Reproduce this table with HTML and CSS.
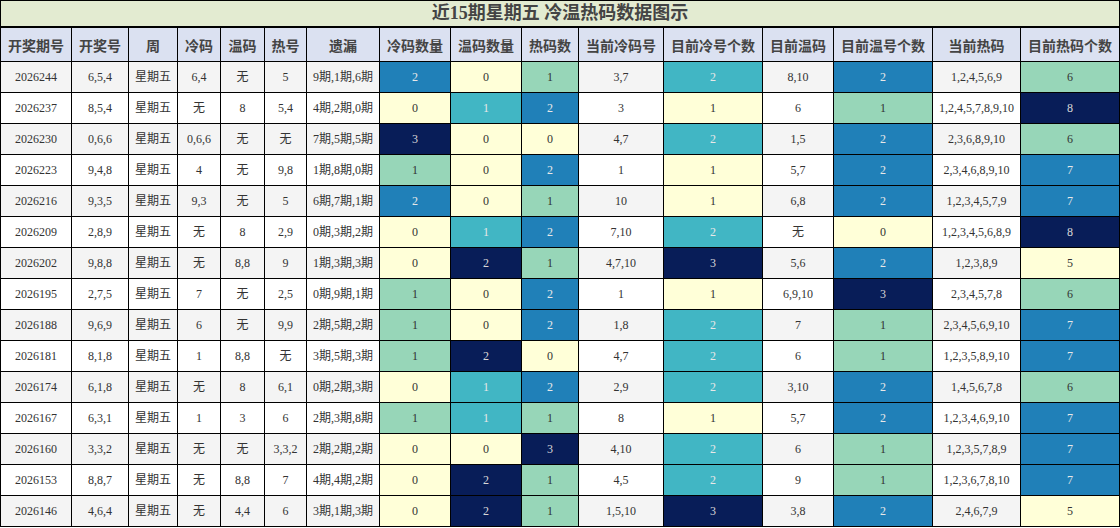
FILE: index.html
```html
<!DOCTYPE html>
<html lang="zh-CN">
<head>
<meta charset="utf-8">
<title>近15期星期五 冷温热码数据图示</title>
<link rel="stylesheet" href="styles.css">
</head>
<body>
<table class="grid">
<colgroup>
<col class="w71"><col class="w57"><col class="w49"><col class="w43"><col class="w44"><col class="w42"><col class="w73"><col class="w71"><col class="w71"><col class="w57"><col class="w85"><col class="w99"><col class="w71"><col class="w99"><col class="w88"><col class="w99">
</colgroup>
<thead>
<tr class="title-row"><th colspan="16">近15期星期五 冷温热码数据图示</th></tr>
<tr class="head-row">
<th>开奖期号</th><th>开奖号</th><th>周</th><th>冷码</th><th>温码</th><th>热号</th><th>遗漏</th><th>冷码数量</th><th>温码数量</th><th>热码数</th><th>当前冷码号</th><th>目前冷号个数</th><th>目前温码</th><th>目前温号个数</th><th>当前热码</th><th>目前热码个数</th>
</tr>
</thead>
<tbody>
<tr><td>2026244</td><td>6,5,4</td><td>星期五</td><td>6,4</td><td>无</td><td>5</td><td>9期,1期,6期</td><td class="c3">2</td><td class="c0">0</td><td class="c1">1</td><td>3,7</td><td class="c2">2</td><td>8,10</td><td class="c3">2</td><td>1,2,4,5,6,9</td><td class="c1">6</td></tr>
<tr><td>2026237</td><td>8,5,4</td><td>星期五</td><td>无</td><td>8</td><td>5,4</td><td>4期,2期,0期</td><td class="c0">0</td><td class="c2">1</td><td class="c3">2</td><td>3</td><td class="c0">1</td><td>6</td><td class="c1">1</td><td>1,2,4,5,7,8,9,10</td><td class="c4">8</td></tr>
<tr><td>2026230</td><td>0,6,6</td><td>星期五</td><td>0,6,6</td><td>无</td><td>无</td><td>7期,5期,5期</td><td class="c4">3</td><td class="c0">0</td><td class="c0">0</td><td>4,7</td><td class="c2">2</td><td>1,5</td><td class="c3">2</td><td>2,3,6,8,9,10</td><td class="c1">6</td></tr>
<tr><td>2026223</td><td>9,4,8</td><td>星期五</td><td>4</td><td>无</td><td>9,8</td><td>1期,8期,0期</td><td class="c1">1</td><td class="c0">0</td><td class="c3">2</td><td>1</td><td class="c0">1</td><td>5,7</td><td class="c3">2</td><td>2,3,4,6,8,9,10</td><td class="c3">7</td></tr>
<tr><td>2026216</td><td>9,3,5</td><td>星期五</td><td>9,3</td><td>无</td><td>5</td><td>6期,7期,1期</td><td class="c3">2</td><td class="c0">0</td><td class="c1">1</td><td>10</td><td class="c0">1</td><td>6,8</td><td class="c3">2</td><td>1,2,3,4,5,7,9</td><td class="c3">7</td></tr>
<tr><td>2026209</td><td>2,8,9</td><td>星期五</td><td>无</td><td>8</td><td>2,9</td><td>0期,3期,2期</td><td class="c0">0</td><td class="c2">1</td><td class="c3">2</td><td>7,10</td><td class="c2">2</td><td>无</td><td class="c0">0</td><td>1,2,3,4,5,6,8,9</td><td class="c4">8</td></tr>
<tr><td>2026202</td><td>9,8,8</td><td>星期五</td><td>无</td><td>8,8</td><td>9</td><td>1期,3期,3期</td><td class="c0">0</td><td class="c4">2</td><td class="c1">1</td><td>4,7,10</td><td class="c4">3</td><td>5,6</td><td class="c3">2</td><td>1,2,3,8,9</td><td class="c0">5</td></tr>
<tr><td>2026195</td><td>2,7,5</td><td>星期五</td><td>7</td><td>无</td><td>2,5</td><td>0期,9期,1期</td><td class="c1">1</td><td class="c0">0</td><td class="c3">2</td><td>1</td><td class="c0">1</td><td>6,9,10</td><td class="c4">3</td><td>2,3,4,5,7,8</td><td class="c1">6</td></tr>
<tr><td>2026188</td><td>9,6,9</td><td>星期五</td><td>6</td><td>无</td><td>9,9</td><td>2期,5期,2期</td><td class="c1">1</td><td class="c0">0</td><td class="c3">2</td><td>1,8</td><td class="c2">2</td><td>7</td><td class="c1">1</td><td>2,3,4,5,6,9,10</td><td class="c3">7</td></tr>
<tr><td>2026181</td><td>8,1,8</td><td>星期五</td><td>1</td><td>8,8</td><td>无</td><td>3期,5期,3期</td><td class="c1">1</td><td class="c4">2</td><td class="c0">0</td><td>4,7</td><td class="c2">2</td><td>6</td><td class="c1">1</td><td>1,2,3,5,8,9,10</td><td class="c3">7</td></tr>
<tr><td>2026174</td><td>6,1,8</td><td>星期五</td><td>无</td><td>8</td><td>6,1</td><td>0期,2期,3期</td><td class="c0">0</td><td class="c2">1</td><td class="c3">2</td><td>2,9</td><td class="c2">2</td><td>3,10</td><td class="c3">2</td><td>1,4,5,6,7,8</td><td class="c1">6</td></tr>
<tr><td>2026167</td><td>6,3,1</td><td>星期五</td><td>1</td><td>3</td><td>6</td><td>2期,3期,8期</td><td class="c1">1</td><td class="c2">1</td><td class="c1">1</td><td>8</td><td class="c0">1</td><td>5,7</td><td class="c3">2</td><td>1,2,3,4,6,9,10</td><td class="c3">7</td></tr>
<tr><td>2026160</td><td>3,3,2</td><td>星期五</td><td>无</td><td>无</td><td>3,3,2</td><td>2期,2期,2期</td><td class="c0">0</td><td class="c0">0</td><td class="c4">3</td><td>4,10</td><td class="c2">2</td><td>6</td><td class="c1">1</td><td>1,2,3,5,7,8,9</td><td class="c3">7</td></tr>
<tr><td>2026153</td><td>8,8,7</td><td>星期五</td><td>无</td><td>8,8</td><td>7</td><td>4期,4期,2期</td><td class="c0">0</td><td class="c4">2</td><td class="c1">1</td><td>4,5</td><td class="c2">2</td><td>9</td><td class="c1">1</td><td>1,2,3,6,7,8,10</td><td class="c3">7</td></tr>
<tr><td>2026146</td><td>4,6,4</td><td>星期五</td><td>无</td><td>4,4</td><td>6</td><td>3期,1期,3期</td><td class="c0">0</td><td class="c4">2</td><td class="c1">1</td><td>1,5,10</td><td class="c4">3</td><td>3,8</td><td class="c3">2</td><td>2,4,6,7,9</td><td class="c0">5</td></tr>
</tbody>
</table>
</body>
</html>
```
FILE: styles.css
```css
html, body {
  margin: 0;
  padding: 0;
  background: #ffffff;
}

.grid {
  width: 1120px;
  table-layout: fixed;
  border-collapse: collapse;
  font-family: "Liberation Serif", "Noto Sans CJK SC", serif;
  color: #333333;
}

.w71 { width: 71px; }
.w57 { width: 57px; }
.w49 { width: 49px; }
.w43 { width: 43px; }
.w44 { width: 44px; }
.w42 { width: 42px; }
.w73 { width: 73px; }
.w85 { width: 85px; }
.w88 { width: 88px; }
.w99 { width: 99px; }

.grid th,
.grid td {
  border: 1px solid #000000;
  padding: 0;
  text-align: center;
  overflow: hidden;
  white-space: nowrap;
}

.title-row th {
  height: 25px;
  background: #e3ebd1;
  border-bottom: 2px solid #000000;
  font-size: 18px;
  font-weight: bold;
  color: #444444;
  line-height: 25px;
}

.head-row th {
  height: 33px;
  background: #dbe1f1;
  font-size: 14px;
  font-weight: bold;
  color: #444444;
  font-family: "Noto Sans CJK SC", sans-serif;
}

.grid td {
  height: 30px;
  font-size: 12px;
  line-height: 16px;
}

.grid tbody tr:nth-child(odd) td { background: #f4f4f4; }
.grid tbody tr:nth-child(even) td { background: #ffffff; }

.grid tbody tr td.c0 { background: #ffffd8; color: #333333; }
.grid tbody tr td.c1 { background: #97d6b8; color: #333333; }
.grid tbody tr td.c2 { background: #41b6c4; color: #e8e8e8; }
.grid tbody tr td.c3 { background: #2080b8; color: #e8e8e8; }
.grid tbody tr td.c4 { background: #081d58; color: #d8d8d8; }
```
